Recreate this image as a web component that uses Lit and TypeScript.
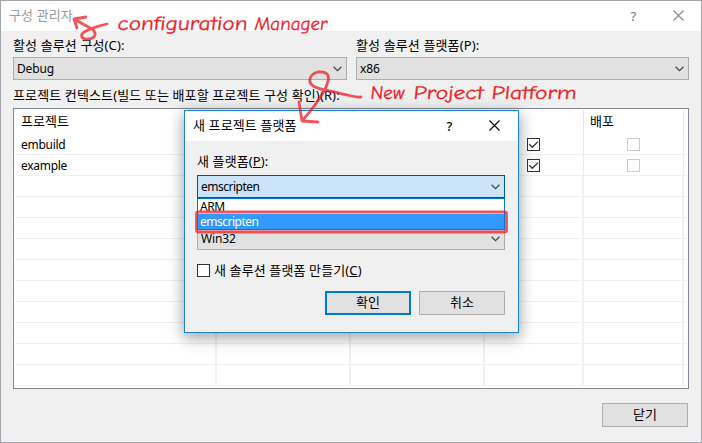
import { LitElement, html, css, svg } from "lit";
import { customElement, property } from "lit/decorators.js";

const textFont = css`font: 12px/16px "Noto Sans", "Noto Sans CJK KR", sans-serif;`;

@customElement("combo-box")
class ComboBox extends LitElement {
  @property() value = "";
  @property({ type: Boolean, reflect: true }) open = false;
  static styles = css`
    :host { display: flex; box-sizing: border-box; height: 23px; border: 1px solid #adadad; background: #e1e1e1;
      align-items: center; justify-content: space-between; padding: 0 4px 0 3px; color: #000; ${textFont} letter-spacing: -0.15px; }
    :host([open]) { background: #cce4f7; border-color: #005499; letter-spacing: -0.5px; }
    svg { display: block; }
  `;
  render() {
    return html`<span>${this.value}</span>
      <svg width="9" height="6" viewBox="0 0 9 6"><path d="M.6 .8 4.5 4.6 8.4 .8" fill="none" stroke="#444" stroke-width="1.2"/></svg>`;
  }
}

@customElement("check-box")
class CheckBox extends LitElement {
  @property({ type: Boolean }) checked = false;
  @property({ type: Boolean, reflect: true }) disabled = false;
  static styles = css`
    :host { display: block; box-sizing: border-box; width: 13px; height: 13px; border: 1px solid #333; background: #fff; flex: none; }
    :host([disabled]) { border-color: #ccc; }
    svg { display: block; }
  `;
  render() {
    return this.checked
      ? html`<svg width="11" height="11" viewBox="0 0 11 11"><path d="M1.3 5.3 4.3 8.3 10 2.6" fill="none" stroke="#333" stroke-width="1.3"/></svg>`
      : html``;
  }
}

@customElement("title-buttons")
class TitleButtons extends LitElement {
  static styles = css`
    :host { display: flex; align-items: center; }
    span { width: 9px; text-align: center; font: 500 13px/16px "Noto Sans", sans-serif; margin: 0 35px 1px 0; }
    svg { display: block; position: relative; top: -.5px; }
  `;
  render() {
    return html`<span>?</span><svg width="11" height="11" viewBox="0 0 11 11"><path d="M.5 .5 10.5 10.5M10.5 .5 .5 10.5" stroke="currentColor" stroke-width="1.1"/></svg>`;
  }
}

const rows = ["embuild", "example", ...Array(10).fill("")];

@customElement("app-root")
class AppRoot extends LitElement {
  static styles = css`
    :host { display: block; position: relative; width: 702px; height: 443px; overflow: hidden; color: #000; ${textFont} white-space: nowrap; }
    * { box-sizing: border-box; }
    .window { height: 443px; border: 1px solid #a3a3a8; background: #f0f0f0; display: flex; flex-direction: column; }
    .title { height: 30px; background: #fff; color: #999; display: flex; align-items: center; justify-content: space-between; padding: 0 17px 0 8px; flex: none; }
    .title .label { padding-bottom: 2px; }
    .title title-buttons { color: #888; }
    .body { padding: 6px 12px 15px; display: flex; flex-direction: column; flex: 1; }
    .pair { display: grid; grid-template-columns: 334px 333px; gap: 9px; }
    .field { display: flex; flex-direction: column; gap: 4px; }
    .label { font-size: 13px; line-height: 16px; letter-spacing: .12px; }
    .context { margin-top: 7px; height: 21px; }
    .grid { height: 281px; border: 1px solid #828790; background: #fff; padding: 1px 1px 2px; }
    .row { display: grid; grid-template-columns: 202px 134px 134px 99px 100px 1fr; height: 21px; border-bottom: 1px solid #f0f0f0; letter-spacing: -.28px; }
    .cell { border-right: 1px solid #e9ecf2; display: flex; align-items: center; padding: 2px 0 0 6px; }
    .row .cell:last-child { border: 0; }
    .head { height: 24px; border: 0; font-size: 13px; letter-spacing: .08px; }
    .head .cell { border-color: #e5e5e5; padding: 0 0 3px 6px; }
    .row .mark { justify-content: center; padding: 0; }
    .row .build { padding-right: 2px; }
    .blank .cell { border-right-width: 2px; border-color: #eef0f6; }
    .foot { margin-top: 14px; display: flex; justify-content: flex-end; padding-right: 1px; }
    .button { width: 86px; height: 24px; border: 1px solid #adadad; background: #e1e1e1; display: flex; align-items: center; justify-content: center; font-size: 13px; padding-bottom: 2px; }
    .primary { border: 2px solid #0078d7; }
    .dialog { position: absolute; left: 184px; top: 110px; width: 335px; height: 223px; border: 1px solid #1883d7; background: #f0f0f0; box-shadow: 0 4px 14px 1px rgba(0,0,0,.36); display: flex; flex-direction: column; }
    .dialog .title { color: #000; padding: 0 18px 0 8px; }
    .dialog .title title-buttons { color: #000; }
    .form { padding: 12px 13px 0 12px; position: relative; }
    .form .platform { gap: 6px; }
    .second { margin-top: 29px; }
    .create { display: flex; align-items: center; gap: 4px; margin-top: 12px; height: 16px; }
    .actions { display: flex; gap: 8px; justify-content: flex-end; margin-top: 13px; }
    .list { position: absolute; left: 12px; right: 13px; top: 57px; height: 32px; border: 1px solid #0078d7; background: #fff; letter-spacing: -.5px; }
    .option { height: 15px; line-height: 15px; padding-left: 2px; overflow: hidden; }
    .chosen { background: #3399ff; color: #fff; }
    .ink { position: absolute; left: 0; top: 0; }
    .ink text { fill: #ee1c25; stroke: #ee1c25; stroke-width: .3px; font-family: "Comic Neue", cursive, "Lato", sans-serif; }
  `;
  render() {
    return html`
      <div class="window">
        <div class="title"><span class="label">구성 관리자</span><title-buttons></title-buttons></div>
        <div class="body">
          <div class="pair">
            <div class="field"><span class="label">활성 솔루션 구성(C):</span><combo-box value="Debug"></combo-box></div>
            <div class="field"><span class="label">활성 솔루션 플랫폼(P):</span><combo-box value="x86"></combo-box></div>
          </div>
          <div class="context label">프로젝트 컨텍스트(빌드 또는 배포할 프로젝트 구성 확인)(R):</div>
          <div class="grid">
            <div class="row head"><div class="cell">프로젝트</div><div class="cell"></div><div class="cell"></div><div class="cell"></div><div class="cell">배포</div><div class="cell"></div></div>
            ${rows.map((name) => html`<div class="row ${name ? "" : "blank"}">
              <div class="cell">${name}</div><div class="cell"></div><div class="cell"></div>
              <div class="cell mark build">${name ? html`<check-box checked></check-box>` : ""}</div>
              <div class="cell mark">${name ? html`<check-box disabled></check-box>` : ""}</div><div class="cell"></div>
            </div>`)}
          </div>
          <div class="foot"><div class="button">닫기</div></div>
        </div>
      </div>
      <div class="dialog">
        <div class="title"><span class="label">새 프로젝트 플랫폼</span><title-buttons></title-buttons></div>
        <div class="form">
          <div class="field platform"><span class="label">새 플랫폼(<u>P</u>):</span><combo-box open value="emscripten"></combo-box></div>
          <combo-box class="second" value="Win32"></combo-box>
          <div class="list"><div class="option">ARM</div><div class="option chosen">emscripten</div></div>
          <div class="create"><check-box></check-box><span class="label">새 솔루션 플랫폼 만들기(<u>C</u>)</span></div>
          <div class="actions"><div class="button primary">확인</div><div class="button">취소</div></div>
        </div>
      </div>
      <svg class="ink" width="702" height="443" viewBox="0 0 702 443">
        ${svg`<g fill="none" stroke="#ed1c24" stroke-opacity=".75" stroke-width="2.8" stroke-linecap="round" stroke-linejoin="round">
          <path d="M107 24C98 26 86 30 83 33C79 37 84 40 89 39C96 38 97 33 92 29L74 19M86 17L74 19L77 28"/>
          <path d="M361 97C355 98 350 95 342 94C332 91 320 90 313 86C307 81 310 74 318 72C326 71 330 75 328 81C326 91 315 106 302 121M299 102L302 121L318 122"/>
          <rect x="196.5" y="212" width="310" height="20" rx="2"/>
        </g>
        <g transform="translate(0 30) skewX(-6)">
          <text x="117" y="0" font-size="20" textLength="130" lengthAdjust="spacingAndGlyphs">configuration</text>
          <text x="254" y="0" font-size="19" textLength="73" lengthAdjust="spacingAndGlyphs">Manager</text>
        </g>
        <g transform="translate(0 99) skewX(-6)">
          <text x="370" y="0" font-size="19" textLength="34" lengthAdjust="spacingAndGlyphs">New</text>
          <text x="413" y="0" font-size="19" textLength="70" lengthAdjust="spacingAndGlyphs">Project</text>
          <text x="491" y="0" font-size="19" textLength="85" lengthAdjust="spacingAndGlyphs">Platform</text>
        </g>`}
      </svg>`;
  }
}
